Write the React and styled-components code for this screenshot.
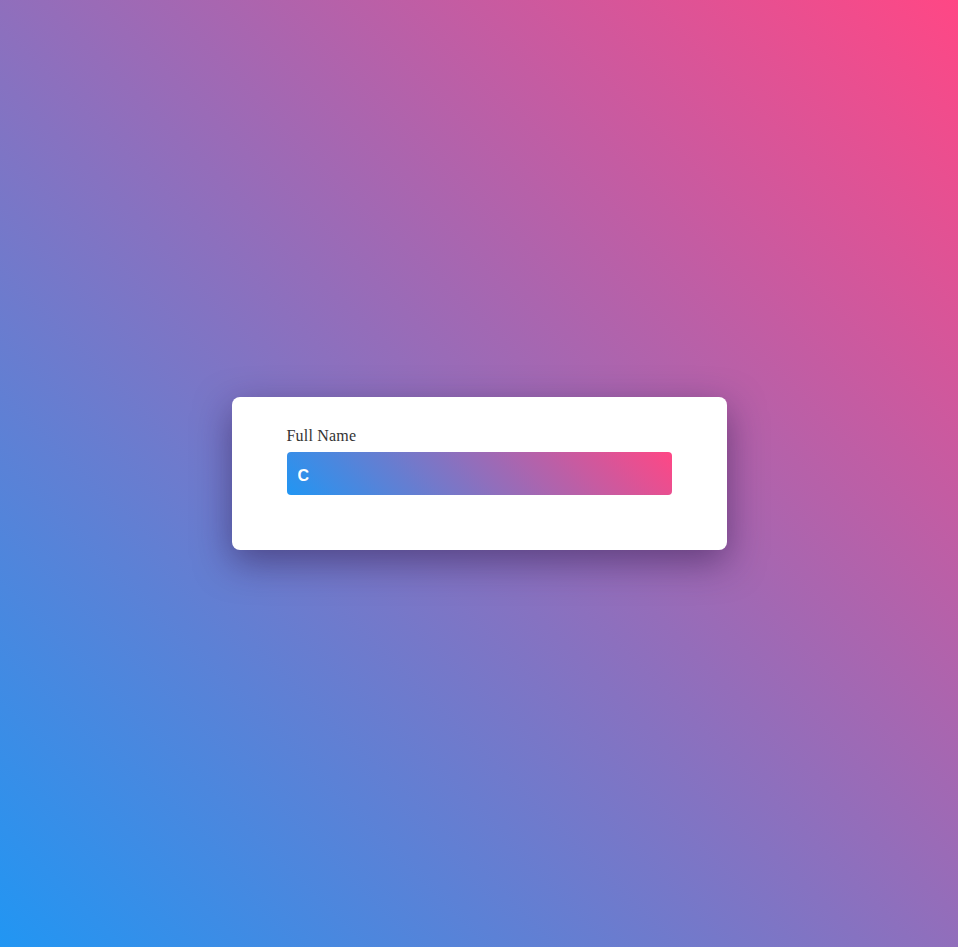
import React from 'react';
import styled, { createGlobalStyle } from 'styled-components';

const GlobalStyle = createGlobalStyle`
  html, body, #root {
    margin: 0;
    height: 100%;
  }
  body {
    font-family: "Liberation Serif", "Times New Roman", serif;
  }
`;

const Page = styled.div`
  width: 100%;
  height: 100%;
  display: flex;
  align-items: center;
  justify-content: center;
  background: linear-gradient(45deg, #2196f3, #ff4785);
`;

const Card = styled.form`
  width: 385px;
  padding: 30px 55px 55px;
  background: #fff;
  border-radius: 8px;
  box-shadow: 0 12px 36px rgba(40, 20, 70, 0.5);
`;

const Label = styled.label`
  display: block;
  margin-bottom: 7px;
  font-size: 16px;
  color: #333;
  letter-spacing: 0.2px;
`;

const Input = styled.input`
  box-sizing: border-box;
  display: block;
  width: 100%;
  height: 43px;
  padding: 4px 11px 0;
  border: none;
  border-radius: 4px;
  outline: none;
  background: linear-gradient(45deg, #2196f3, #ff4785);
  color: #fff;
  font-family: "Liberation Sans", Arial, sans-serif;
  font-size: 16px;
  font-weight: bold;
`;

export default function App() {
  return (
    <>
      <GlobalStyle />
      <Page>
        <Card onSubmit={e => e.preventDefault()}>
          <Label htmlFor="fullname">Full Name</Label>
          <Input id="fullname" type="text" defaultValue="C" />
        </Card>
      </Page>
    </>
  );
}
